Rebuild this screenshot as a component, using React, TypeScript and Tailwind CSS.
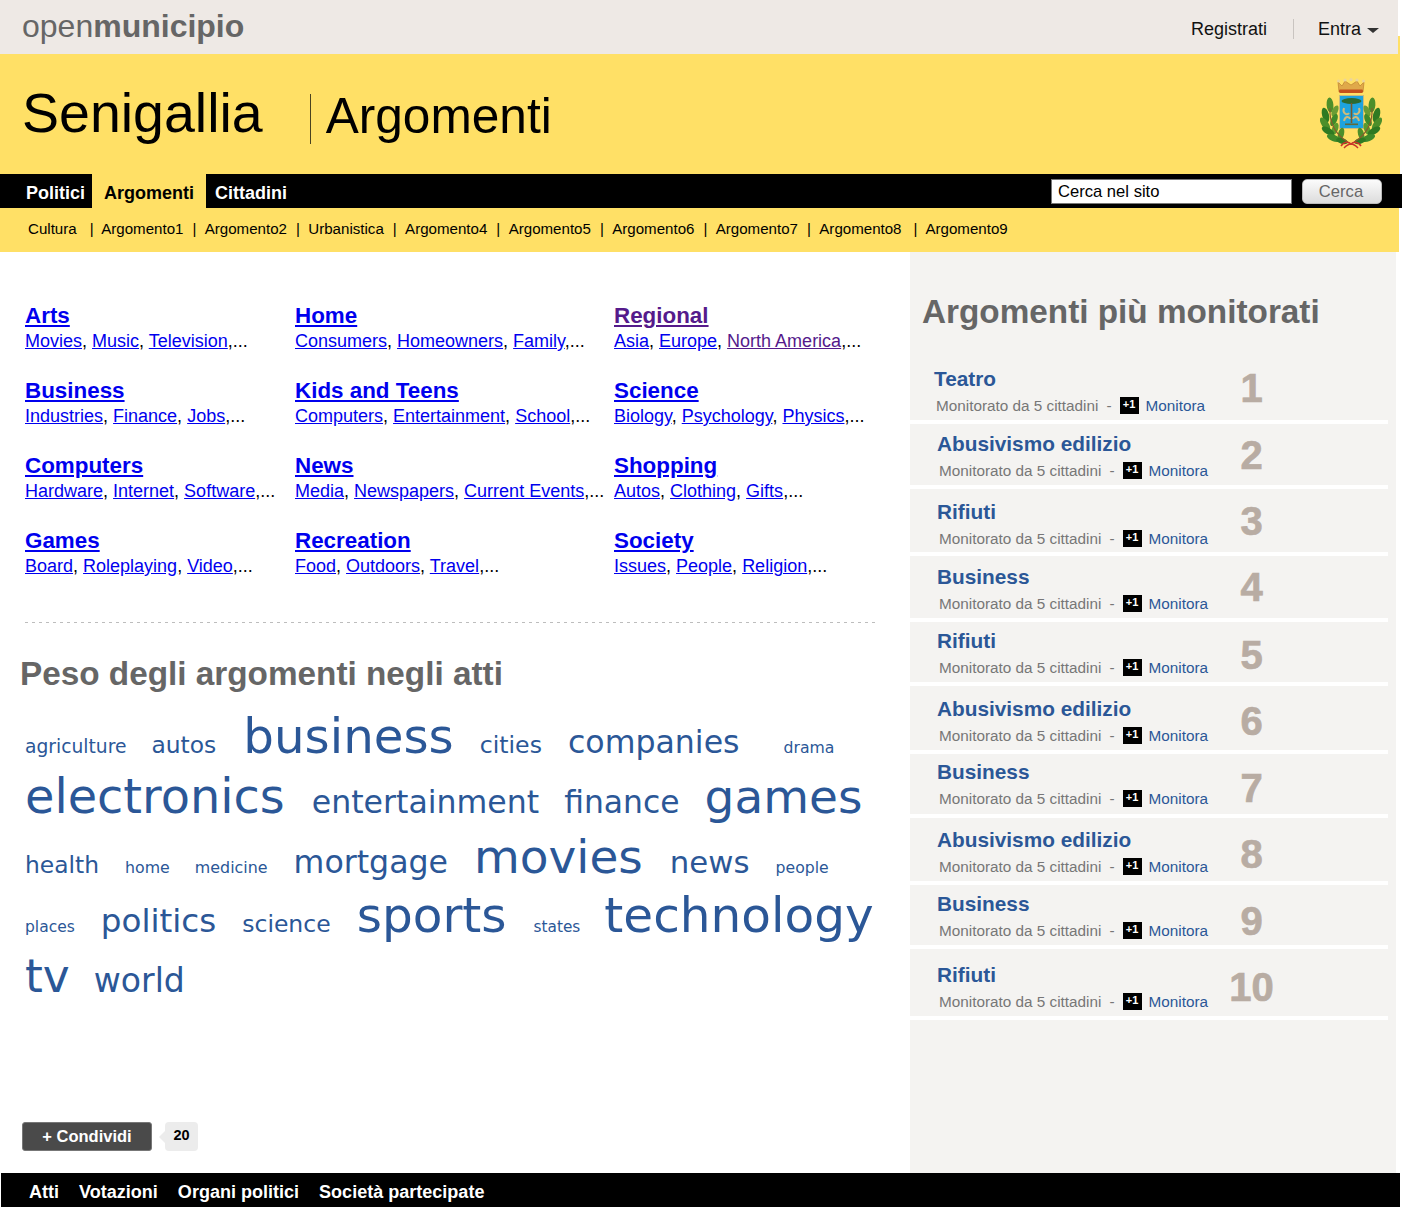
const categories = [
  { title: 'Arts', links: ['Movies', 'Music', 'Television'] },
  { title: 'Home', links: ['Consumers', 'Homeowners', 'Family'] },
  { title: 'Regional', links: ['Asia', 'Europe', 'North America'], visited: true },
  { title: 'Business', links: ['Industries', 'Finance', 'Jobs'] },
  { title: 'Kids and Teens', links: ['Computers', 'Entertainment', 'School'] },
  { title: 'Science', links: ['Biology', 'Psychology', 'Physics'] },
  { title: 'Computers', links: ['Hardware', 'Internet', 'Software'] },
  { title: 'News', links: ['Media', 'Newspapers', 'Current Events'] },
  { title: 'Shopping', links: ['Autos', 'Clothing', 'Gifts'] },
  { title: 'Games', links: ['Board', 'Roleplaying', 'Video'] },
  { title: 'Recreation', links: ['Food', 'Outdoors', 'Travel'] },
  { title: 'Society', links: ['Issues', 'People', 'Religion'] },
]

const subnav = ['Argomento1', 'Argomento2', 'Urbanistica', 'Argomento4', 'Argomento5', 'Argomento6', 'Argomento7', 'Argomento8']

const cloud = [
  {
    row: 'h-[61px] gap-x-[26px]',
    tags: [
      ['agriculture', 'text-[18.7px]'],
      ['autos', 'text-[23.4px] -ml-[1px]'],
      ['business', 'text-[48.3px] ml-[1px]'],
      ['cities', 'text-[23.6px]'],
      ['companies', 'text-[31.6px]'],
      ['drama', 'text-[15.7px] ml-[18px]'],
    ],
  },
  {
    row: 'h-[60px] gap-x-[27px]',
    tags: [
      ['electronics', 'text-[47.8px]'],
      ['entertainment', 'text-[31.6px]'],
      ['finance', 'text-[31.4px] -ml-[2px]'],
      ['games', 'text-[47px] -ml-[2px]'],
    ],
  },
  {
    row: 'h-[58px] gap-x-[26px]',
    tags: [
      ['health', 'text-[23.4px]'],
      ['home', 'text-[15.8px]'],
      ['medicine', 'text-[15.9px] -ml-[1px]'],
      ['mortgage', 'text-[31.6px]'],
      ['movies', 'text-[47px]'],
      ['news', 'text-[30.8px] ml-[1px]'],
      ['people', 'text-[15.7px]'],
    ],
  },
  {
    row: 'h-[62px] gap-x-[26px]',
    tags: [
      ['places', 'text-[15.5px]'],
      ['politics', 'text-[32.6px]'],
      ['science', 'text-[23.5px]'],
      ['sports', 'text-[48.5px]'],
      ['states', 'text-[15.3px] ml-[1px]'],
      ['technology', 'text-[48.5px] -ml-[2px]'],
    ],
  },
  {
    row: 'h-[60px] gap-x-[24px]',
    tags: [
      ['tv', 'text-[45.5px]'],
      ['world', 'text-[33.1px]'],
    ],
  },
]

const ranking = [
  { title: 'Teatro', row: 'h-[60px]', text: 'pt-[4px] pl-[24px]', num: 'pt-[4px]' },
  { title: 'Abusivismo edilizio', row: 'h-[65px]', text: 'pt-[9px] pl-[27px]', num: 'pt-[11px]' },
  { title: 'Rifiuti', row: 'h-[67px]', text: 'pt-[12px] pl-[27px]', num: 'pt-[12px]' },
  { title: 'Business', row: 'h-[66px]', text: 'pt-[10px] pl-[27px]', num: 'pt-[11px]' },
  { title: 'Rifiuti', row: 'h-[64px]', text: 'pt-[8px] pl-[27px]', num: 'pt-[13px]' },
  { title: 'Abusivismo edilizio', row: 'h-[68px]', text: 'pt-[12px] pl-[27px]', num: 'pt-[15px]' },
  { title: 'Business', row: 'h-[64px]', text: 'pt-[7px] pl-[27px]', num: 'pt-[14px]' },
  { title: 'Abusivismo edilizio', row: 'h-[67px]', text: 'pt-[11px] pl-[27px]', num: 'pt-[16px]' },
  { title: 'Business', row: 'h-[64px]', text: 'pt-[8px] pl-[27px]', num: 'pt-[16px]' },
  { title: 'Rifiuti', row: 'h-[71px]', text: 'pt-[15px] pl-[27px]', num: 'pt-[18px]' },
]

const leaves = [
  [10, 27, 3.4, 7.5, -5, '#4d8f2a'],
  [15, 33, 2.8, 6, 25, '#6a9c34'],
  [5.5, 37, 3.4, 7.5, -15, '#2f7a22'],
  [14, 42, 3, 6.5, 25, '#3f8a2a'],
  [5, 46, 3.4, 7.5, -35, '#4d8f2a'],
  [15, 51, 3, 6.5, 20, '#5a9a2e'],
  [8, 53, 3.2, 7, -60, '#2f7a22'],
  [21, 56, 3, 6.5, 15, '#4d8f2a'],
  [13.5, 60, 3.2, 7, -68, '#3f8a2a'],
  [22, 63, 2.8, 6, -75, '#2f7a22'],
] as const

function Branch() {
  return (
    <g>
      {leaves.map(([cx, cy, rx, ry, rot, fill]) => (
        <ellipse key={`${cx}-${cy}`} cx={cx} cy={cy} rx={rx} ry={ry} fill={fill} transform={`rotate(${rot} ${cx} ${cy})`} />
      ))}
      <path d="M10 30 C9 46 16 57 29 65" stroke="#8a5a2c" strokeWidth="1.1" fill="none" />
    </g>
  )
}

function Crest() {
  return (
    <svg width="62" height="72" viewBox="0 0 62 72" className="block blur-[0.3px]">
      {/* crown */}
      <path d="M18 4 L22 8 L25 3 L31 7 L37 3 L40 8 L44 4 L43 14 L19 14 Z" fill="#e0a94a" stroke="#b5762a" strokeWidth="0.6" />
      <g fill="#ecd59a">
        <circle cx="18.5" cy="3" r="1.6" />
        <circle cx="25" cy="2" r="1.6" />
        <circle cx="31" cy="1.6" r="1.6" />
        <circle cx="37" cy="2" r="1.6" />
        <circle cx="43.5" cy="3" r="1.6" />
      </g>
      <rect x="19" y="11.5" width="24" height="3.5" rx="1.4" fill="#c4501c" />
      {/* shield */}
      <rect x="19.5" y="17.5" width="24" height="33" fill="#1ea3de" stroke="#c9bb7e" strokeWidth="1" />
      <ellipse cx="31.5" cy="23" rx="10" ry="3" fill="#2c6a30" />
      <path d="M31.5 25 V45" stroke="#7a5a2a" strokeWidth="1.6" />
      <path d="M24 30 C22 35 27 38 29 35 M39 30 C41 35 36 38 34 35 M24 43 C25 38 29 38 30 41 M39 43 C38 38 34 38 33 41" stroke="#cdbb7c" strokeWidth="2" fill="none" />
      <rect x="25" y="45.5" width="13" height="1.6" fill="#5f6a3a" />
      {/* laurel */}
      <Branch />
      <g transform="translate(62 0) scale(-1 1)">
        <Branch />
      </g>
      {/* ribbon */}
      <path d="M21 68 C24 63 29 64 31 66 C33 64 38 63 41 68 M24 70 C27 67 29 66 31 66 C33 66 35 67 38 70" stroke="#c8352a" strokeWidth="1.5" fill="none" />
    </svg>
  )
}

export default function App() {
  return (
    <div className="font-['Liberation_Sans',Arial,sans-serif] text-black bg-white w-[1412px] h-[1218px] overflow-hidden">
      {/* top bar */}
      <div className="flex">
        <div className="w-[1398px] h-[54px] bg-[#eee9e5] flex items-start justify-between pl-[22px] pr-[19px]">
          <div className="text-[32px] leading-[52px] text-[#666]">
            open<span className="font-bold">municipio</span>
          </div>
          <div className="flex items-center h-[20px] mt-[19px] text-[18px] text-[#111]">
            <span className="pr-[26px]">Registrati</span>
            <span className="h-[20px] border-l border-[#c9c4c0]" />
            <span className="pl-[24px]">Entra</span>
            <span className="ml-[6px] mt-[2px] w-0 h-0 border-x-[6px] border-x-transparent border-t-[5px] border-t-[#333]" />
          </div>
        </div>
        <div className="w-[2px] h-[18px] mt-[36px] bg-[#ffe066]" />
      </div>

      {/* title */}
      <div className="w-[1400px] h-[120px] bg-[#ffe066] flex items-start pl-[22px] pr-[18px]">
        <h1 className="text-[55.5px] leading-[64px] mt-[27px] font-normal">Senigallia</h1>
        <span className="h-[50px] border-l border-[#4a4320] ml-[47px] mt-[40px]" />
        <h2 className="text-[49.6px] leading-[60px] mt-[32px] ml-[15px] font-normal">Argomenti</h2>
        <div className="ml-auto mt-[24px]">
          <Crest />
        </div>
      </div>

      {/* main nav */}
      <div className="w-[1402px] h-[34px] bg-black flex items-stretch justify-between pr-[20px]">
        <div className="flex items-stretch text-[18px] font-bold text-white">
          <a className="pl-[26px] w-[92px] leading-[38px]">Politici</a>
          <a className="w-[114px] bg-[#ffe066] text-black text-center leading-[38px]">Argomenti</a>
          <a className="pl-[9px] leading-[38px]">Cittadini</a>
        </div>
        <div className="flex items-center">
          <div className="w-[241px] h-[25px] bg-white border border-[#777] text-[16.6px] leading-[24px] pl-[6px]">Cerca nel sito</div>
          <div className="w-[80px] h-[25px] ml-[10px] pr-[2px] rounded-[5px] bg-gradient-to-b from-[#fbfbfb] to-[#dcdcdc] border border-[#bbb] text-[#666] text-[16.6px] leading-[24px] text-center">Cerca</div>
        </div>
      </div>

      {/* sub nav */}
      <div className="w-[1399px] h-[44px] bg-[#ffe066] flex items-center pl-[28px] pb-[1px] text-[15.1px]">
        <span>Cultura</span>
        <span className="ml-[13px] mr-[7.6px]">|</span>
        {subnav.map((item) => (
          <span key={item} className="flex items-center">
            <span>{item}</span>
            <span className={item === 'Argomento8' ? 'ml-[12px] mr-[8px]' : 'ml-[9px] mr-[8.4px]'}>|</span>
          </span>
        ))}
        <span>Argomento9</span>
      </div>

      <div className="flex">
        {/* left column */}
        <div className="w-[910px] h-[921px] flex flex-col">
          <div className="grid grid-cols-[270px_319px_1fr] pl-[25px] pt-[50px]">
            {categories.map((cat) => (
              <div key={cat.title} className="h-[75px] whitespace-nowrap">
                <a className={`block w-fit text-[22.4px] leading-[27px] font-bold underline ${cat.visited ? 'text-[#551a8b]' : 'text-[#0000ee]'}`}>{cat.title}</a>
                <div className="text-[18px] leading-[24px]">
                  {cat.links.map((link, i) => (
                    <span key={link}>
                      <a className={`underline ${cat.visited && i === 2 ? 'text-[#551a8b]' : 'text-[#0000ee]'}`}>{link}</a>
                      {i < 2 ? ', ' : ',...'}
                    </span>
                  ))}
                </div>
              </div>
            ))}
          </div>
          <div className="ml-[25px] w-[851px] h-px mt-[20px] bg-[repeating-linear-gradient(90deg,#bdbdbd_0,#bdbdbd_3px,transparent_3px,transparent_7px)]" />
          <h3 className="ml-[20px] mt-[31px] text-[33.3px] leading-[40px] font-bold text-[#666]">Peso degli argomenti negli atti</h3>
          <div className="ml-[25px] mt-[12px] font-['DejaVu_Sans',Verdana,sans-serif] text-[#2b5797]">
            {cloud.map((line) => (
              <div key={line.tags[0][0]} className={`flex items-baseline whitespace-nowrap ${line.row}`}>
                {line.tags.map(([tag, size]) => (
                  <a key={tag} className={`${size} leading-[60px]`}>{tag}</a>
                ))}
              </div>
            ))}
          </div>
          <div className="ml-[22px] mt-auto mb-[22px] flex items-center">
            <div className="w-[130px] h-[29px] rounded-[3px] bg-[#4a4a4a] border border-[#777] text-white text-[16.5px] font-bold leading-[27px] text-center">+ Condividi</div>
            <div className="relative ml-[13px] w-[33px] h-[29px] rounded-[4px] bg-[#ececec] text-[14.5px] font-bold leading-[26px] text-center">
              <span className="absolute -left-[6px] top-[9px] w-0 h-0 border-y-[6px] border-y-transparent border-r-[6px] border-r-[#ececec]" />
              20
            </div>
          </div>
        </div>

        {/* right column */}
        <div className="w-[486px] h-[921px] bg-[#f4f3f1]">
          <h3 className="pl-[12px] pt-[40px] text-[33.3px] leading-[40px] font-bold text-[#666] h-[112px]">Argomenti più monitorati</h3>
          {ranking.map((item, i) => (
            <div key={i} className={`flex w-[478px] border-b-4 border-white ${item.row}`}>
              <div className={`w-[300px] shrink-0 ${item.text}`}>
                <a className="block text-[20.8px] leading-[22px] font-bold text-[#2b5797]">{item.title}</a>
                <div className="flex items-center text-[15.3px] leading-[20px] mt-[6px] pl-[2px] text-[#777]">
                  <span>Monitorato da 5 cittadini</span>
                  <span className="ml-[8px] mr-[8px]">-</span>
                  <span className="w-[19px] h-[17px] mb-[2px] bg-black text-white text-[11px] font-bold leading-[15px] text-center">+1</span>
                  <a className="ml-[7px] text-[#2b5797]">Monitora</a>
                </div>
              </div>
              <div className={`w-[83px] text-center text-[40px] leading-[40px] font-bold text-[#b8aca3] [-webkit-text-stroke:0.7px_#b8aca3] ${item.num}`}>{i + 1}</div>
            </div>
          ))}
        </div>
      </div>

      {/* footer */}
      <div className="ml-[1px] w-[1399px] h-[34px] bg-black flex items-center pl-[28px] pt-[5px] gap-x-[20px] text-[18.05px] font-bold text-white">
        <a>Atti</a>
        <a>Votazioni</a>
        <a>Organi politici</a>
        <a>Società partecipate</a>
      </div>
    </div>
  )
}
